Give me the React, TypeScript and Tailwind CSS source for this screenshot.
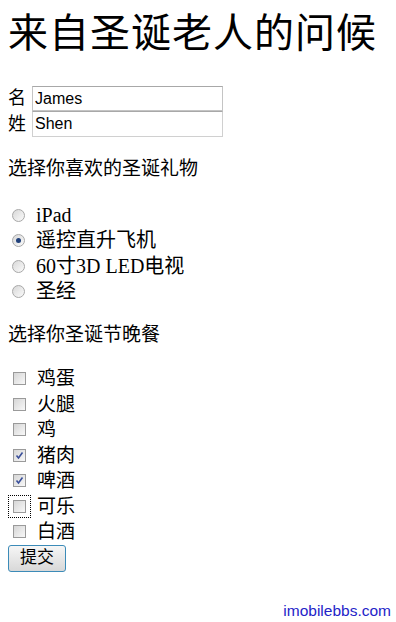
import React from 'react';

const serif = { fontFamily: '"Liberation Serif", "Noto Sans CJK SC", serif' };

const gifts = [
  { label: 'iPad', checked: false },
  { label: '遥控直升飞机', checked: true },
  { label: '60寸3D LED电视', checked: false },
  { label: '圣经', checked: false },
];

const dinner = [
  { label: '鸡蛋', checked: false },
  { label: '火腿', checked: false },
  { label: '鸡', checked: false },
  { label: '猪肉', checked: true },
  { label: '啤酒', checked: true },
  { label: '可乐', checked: false, focus: true },
  { label: '白酒', checked: false },
];

const Radio = ({ checked }: { checked: boolean }) => (
  <span className="w-[13px] h-[13px] rounded-full border border-[#a8a8a8] bg-gradient-to-br from-[#d8d8d8] to-[#fbfbfb] flex items-center justify-center">
    {checked && <span className="w-[5px] h-[5px] rounded-full bg-[#20407a]" />}
  </span>
);

const Check = ({ checked, focus }: { checked: boolean; focus?: boolean }) => (
  <span className={`flex items-center justify-center w-[23px] h-[23px] ${focus ? 'outline outline-1 outline-dotted outline-black -outline-offset-1' : ''}`}>
    <span className="w-[13px] h-[13px] border border-[#9a9a9a] bg-gradient-to-br from-[#d6d6d6] to-[#f8f8f8] flex items-center justify-center">
      {checked && (
        <svg width="9" height="9" viewBox="0 0 9 9">
          <path d="M1.5 4.5 L3.5 7 L7.5 1.5" fill="none" stroke="#3a4f9a" strokeWidth="1.6" />
        </svg>
      )}
    </span>
  </span>
);

export default function App() {
  return (
    <div className="w-[396px] h-[622px] bg-white text-black flex flex-col px-[8px]" style={{ fontFamily: '"Liberation Sans", "Noto Sans CJK SC", sans-serif' }}>
      <h1 className="mt-[10px] h-[48px] leading-[48px] text-[40px] tracking-[1px] whitespace-nowrap" style={serif}>来自圣诞老人的问候</h1>

      <div className="mt-[28px] flex flex-col">
        <div className="flex items-center h-[25px]">
          <span className="w-[24px] text-[18px] leading-[25px]">名</span>
          <input readOnly value="James" className="w-[191px] h-[25px] border border-[#c4c4c4] border-t-[#a8a8a8] px-[2px] text-[16px] outline-none" />
        </div>
        <div className="flex items-center h-[26px]">
          <span className="w-[24px] text-[18px] leading-[26px]">姓</span>
          <input readOnly value="Shen" className="w-[191px] h-[26px] border border-[#d0d0d0] border-t-[#a8a8a8] px-[2px] text-[16px] outline-none" />
        </div>
      </div>

      <div className="mt-[20px] h-[24px] leading-[24px] text-[19px]">选择你喜欢的圣诞礼物</div>

      <div className="mt-[22px] flex flex-col">
        {gifts.map((g) => (
          <div key={g.label} className="flex items-center h-[25.3px]">
            <span className="w-[28px] flex justify-start pl-[4px]"><Radio checked={g.checked} /></span>
            <span className="text-[20px] leading-[25px]" style={serif}>{g.label}</span>
          </div>
        ))}
      </div>

      <div className="mt-[19px] h-[24px] leading-[24px] text-[19px]">选择你圣诞节晚餐</div>

      <div className="mt-[19px] flex flex-col">
        {dinner.map((d) => (
          <div key={d.label} className="flex items-center h-[25.5px]">
            <span className="w-[29px] flex justify-start"><Check checked={d.checked} focus={d.focus} /></span>
            <span className="text-[19px] leading-[25px]">{d.label}</span>
          </div>
        ))}
      </div>

      <div className="flex">
        <button className="w-[58px] h-[27px] rounded-[3px] border border-[#3c8bb8] bg-gradient-to-b from-[#f6f6f6] to-[#d8d8d8] text-[17px] leading-[24px]">提交</button>
      </div>

      <div className="mt-auto mb-[1px] flex justify-end">
        <span className="text-[15.5px] leading-[20px] text-[#2323c8] mr-[-3px]">imobilebbs.com</span>
      </div>
    </div>
  );
}
